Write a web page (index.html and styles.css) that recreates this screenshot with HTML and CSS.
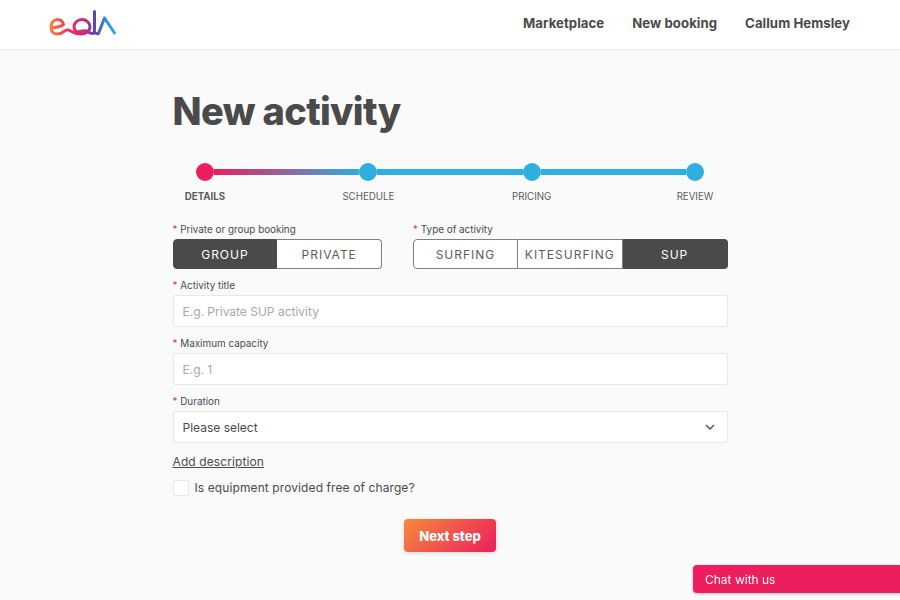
FILE: index.html
```html
<!DOCTYPE html>
<html lang="en">
<head>
<meta charset="utf-8">
<title>New activity</title>
<link rel="stylesheet" href="styles.css">
</head>
<body>
<header class="nav">
  <a class="logo" href="#" aria-label="eola">
    <svg width="70" height="30" viewBox="0 0 70 30" fill="none">
      <defs>
        <linearGradient id="lg" gradientUnits="userSpaceOnUse" x1="0" y1="0" x2="68" y2="0">
          <stop offset="0" stop-color="#f58a3c"/>
          <stop offset=".3" stop-color="#ef2b5d"/>
          <stop offset=".5" stop-color="#d02a78"/>
          <stop offset=".68" stop-color="#5a45a8"/>
          <stop offset=".85" stop-color="#2f8fdc"/>
          <stop offset="1" stop-color="#2fb2e6"/>
        </linearGradient>
      </defs>
      <path d="M2.500 19.500 C7 19.500 11.500 19 14.500 16.500 C13.500 13 11 11.500 8.500 11.500 C4.500 11.500 2 15 2 19 C2 23.500 4.500 26 8.500 26 C13.500 26 15 22 18.500 22 C22 22 24 26 31.500 26 C37 26 41 23 41 18.800 C41 14.500 37 11.500 33 11.500 C28.500 11.500 25 15 25 18.800 C25 22.500 28 24.500 31 23.500 C34 22.500 36.500 22 38.500 23.500 C40.500 25 42 26 44 25.500 C45.500 25 45.500 23 45.500 20 L45.500 3.500" stroke="url(#lg)" stroke-width="3" stroke-linecap="round" stroke-linejoin="round"/>
      <path d="M45.500 24 C46.500 25.500 48 26 49.500 25.500 L55.500 10 L65.500 25" stroke="url(#lg)" stroke-width="3" stroke-linecap="round" stroke-linejoin="round"/>
    </svg>
  </a>
  <nav class="nav-links">
    <a href="#">Marketplace</a>
    <a href="#">New booking</a>
    <a href="#">Callum Hemsley</a>
  </nav>
</header>

<main class="page">
  <h1 class="title">New activity</h1>

  <div class="stepper">
    <div class="track">
      <span class="dot dot-active"></span>
      <span class="line line-grad"></span>
      <span class="dot"></span>
      <span class="line"></span>
      <span class="dot"></span>
      <span class="line"></span>
      <span class="dot"></span>
    </div>
    <div class="step-labels">
      <span class="step-label step-label-active">DETAILS</span>
      <span class="step-label">SCHEDULE</span>
      <span class="step-label">PRICING</span>
      <span class="step-label">REVIEW</span>
    </div>
  </div>

  <form class="form">
    <div class="toggle-row">
      <div class="field">
        <label class="label"><span class="req">*</span> Private or group booking</label>
        <div class="toggle toggle-2">
          <span class="opt opt-on">GROUP</span>
          <span class="opt">PRIVATE</span>
        </div>
      </div>
      <div class="field">
        <label class="label"><span class="req">*</span> Type of activity</label>
        <div class="toggle toggle-3">
          <span class="opt">SURFING</span>
          <span class="opt">KITESURFING</span>
          <span class="opt opt-on">SUP</span>
        </div>
      </div>
    </div>

    <div class="field">
      <label class="label"><span class="req">*</span> Activity title</label>
      <input class="input" type="text" placeholder="E.g. Private SUP activity">
    </div>
    <div class="field">
      <label class="label"><span class="req">*</span> Maximum capacity</label>
      <input class="input" type="text" placeholder="E.g. 1">
    </div>
    <div class="field">
      <label class="label"><span class="req">*</span> Duration</label>
      <div class="input select">
        <span>Please select</span>
        <svg width="10" height="6" viewBox="0 0 10 6" fill="none"><path d="M1 1l4 4 4-4" stroke="#4a4a4a" stroke-width="1.300"/></svg>
      </div>
    </div>

    <a class="add-desc" href="#">Add description</a>

    <label class="check">
      <input class="check-box" type="checkbox">
      <span>Is equipment provided free of charge?</span>
    </label>

    <div class="actions">
      <button class="next" type="button">Next step</button>
    </div>
  </form>
</main>

<div class="chat">Chat with us</div>
</body>
</html>
```

FILE: styles.css
```css
* { box-sizing: border-box; }
html, body { height: 100%; }
body {
  margin: 0;
  height: 600px;
  overflow: hidden;
  background: #fafafa;
  color: #4a4a4a;
  font-family: Inter, "Liberation Sans", sans-serif;
}
a { color: inherit; text-decoration: none; }

.nav {
  height: 50px;
  background: #fff;
  border-bottom: 1px solid #ececec;
  display: flex;
  align-items: center;
  justify-content: space-between;
  padding: 0 50px 0 49px;
}
.logo { display: block; height: 30px; margin-top: -4px; }
.logo svg { display: block; }
.nav-links { display: flex; gap: 28px; margin-top: -3px; }
.nav-links a { font-size: 13.200px; font-weight: 700; color: #4a4a4a; letter-spacing: .05px; }

.page { width: 555px; margin: 0 auto; }
.title {
  margin: 38px 0 0;
  font-size: 38px;
  line-height: 46px;
  font-weight: 800;
  letter-spacing: -.65px;
  color: #4a4a4a;
}

.stepper { margin-top: 29px; }
.track { display: flex; align-items: center; padding: 0 23.500px 0 23px; }
.dot { width: 18px; height: 18px; border-radius: 50%; background: #2faee0; flex: none; }
.dot-active { background: #ec1e5d; }
.line { flex: 1; height: 6px; background: #2faee0; }
.line-grad { background: linear-gradient(90deg, #ec1e5d, #2faee0); }
.step-labels { display: flex; justify-content: space-between; margin-top: 9px; }
.step-label { width: 65px; text-align: center; font-size: 9.700px; line-height: 14px; font-weight: 400; color: #5c5c5c; }
.step-label-active { font-weight: 700; }

.form { margin-top: 19px; display: flex; flex-direction: column; gap: 10px; }
.toggle-row { display: grid; grid-template-columns: 2fr 3fr; gap: 31px; }
.field { display: flex; flex-direction: column; gap: 3px; }
.label { font-size: 9.900px; line-height: 13px; color: #4a4a4a; display: block; }
.req { color: #ec1e5d; }

.toggle { display: grid; height: 30px; }
.toggle-2 { grid-template-columns: 1fr 1fr; }
.toggle-3 { grid-template-columns: 1fr 1fr 1fr; }
.opt {
  display: flex; align-items: center; justify-content: center;
  font-size: 12px; letter-spacing: 1px; color: #5c5c5c;
  background: #fff;
  border: 1px solid #808080;
  border-left-width: 0;
}
.opt:first-child { border-left-width: 1px; border-radius: 4px 0 0 4px; }
.opt:last-child { border-radius: 0 4px 4px 0; }
.opt-on { background: #4a4a4a; color: #fff; border-color: #4a4a4a; }

.input {
  width: 100%;
  height: 32px;
  padding: 0 9px;
  background: #fff;
  border: 1px solid #e8e8e8;
  border-radius: 2px;
  font-family: inherit;
  font-size: 12px;
  color: #4a4a4a;
  outline: none;
}
.input::placeholder { color: #a8a8a8; opacity: 1; }
.select { display: flex; align-items: center; justify-content: space-between; padding-right: 12px; }

.add-desc { font-size: 12px; line-height: 16px; letter-spacing: .1px; text-decoration: underline; align-self: flex-start; margin-top: 1px; }
.check { display: flex; align-items: center; gap: 6px; font-size: 12px; line-height: 16px; letter-spacing: .1px; }
.check-box {
  appearance: none;
  margin: 0;
  width: 16px; height: 16px;
  background: #fff;
  border: 1px solid #e8e8e8;
  border-radius: 2px;
}
.actions { display: flex; justify-content: center; margin-top: 13px; }
.next {
  width: 92px; height: 33px;
  border: 0;
  border-radius: 4px;
  background: linear-gradient(135deg, #f58a3c, #ec1e5d);
  color: #fff;
  font-family: inherit;
  font-size: 13px;
  font-weight: 800;
  box-shadow: 0 1px 4px rgba(0,0,0,.15);
}
.chat {
  position: fixed;
  right: 0;
  bottom: 7px;
  width: 207px;
  height: 28px;
  padding-left: 12px;
  display: flex;
  align-items: center;
  background: #ec1e5d;
  color: #fff;
  font-size: 12px;
  border-radius: 4px 0 0 4px;
  box-shadow: 0 1px 3px rgba(0,0,0,.25);
}
```
